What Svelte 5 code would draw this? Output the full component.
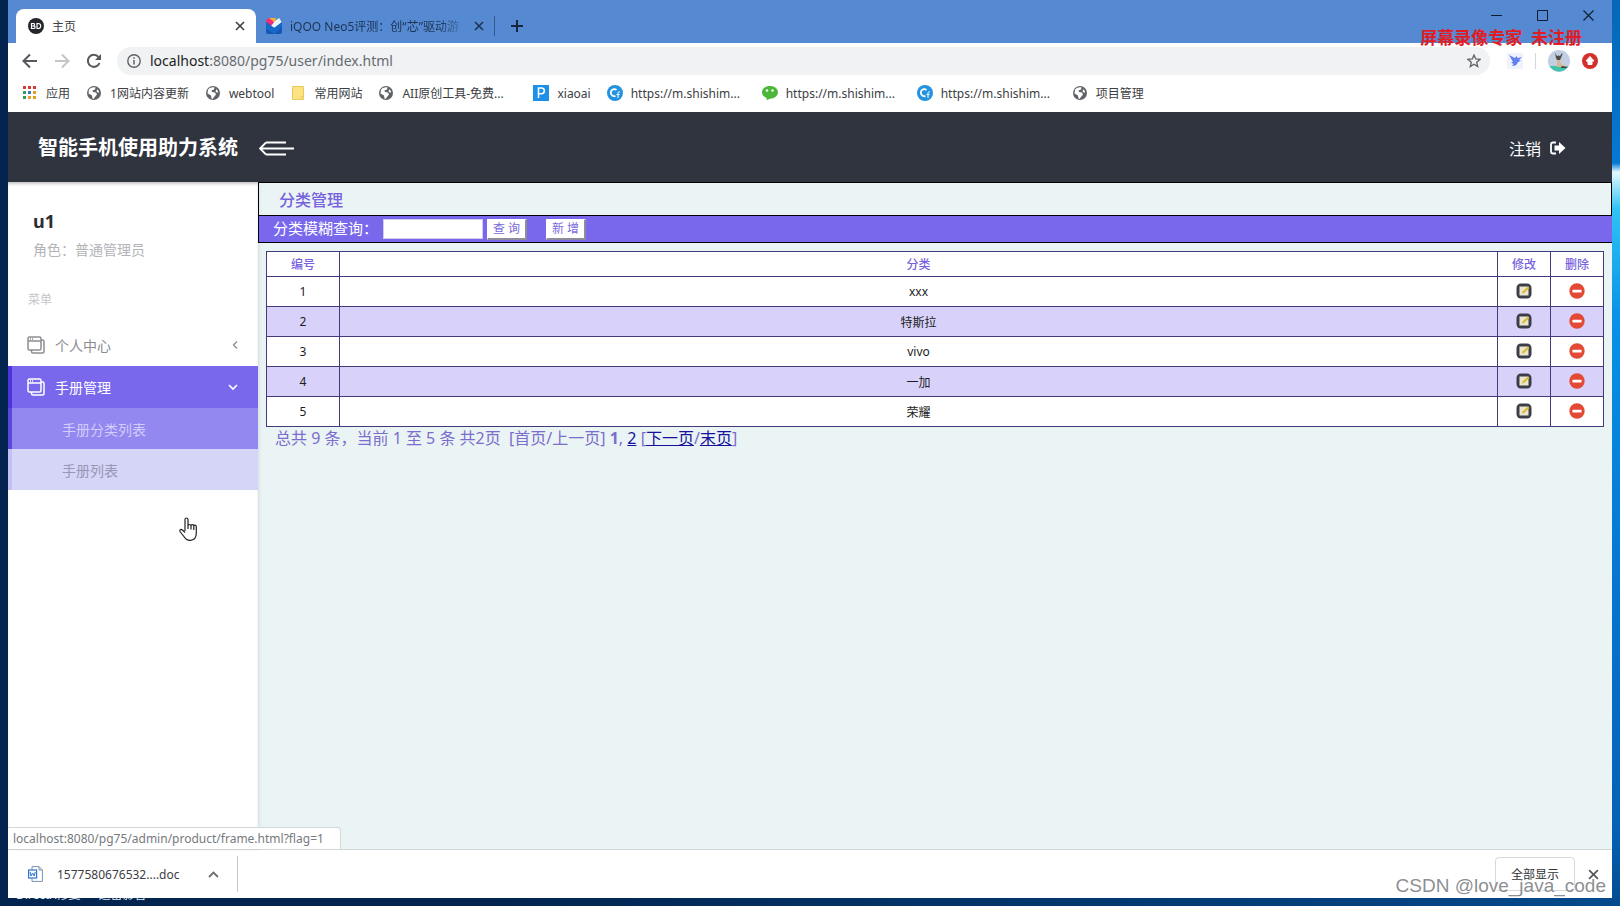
<script>
  const bookmarks = [
    { icon: 'apps', label: '应用' },
    { icon: 'globe', label: '1网站内容更新' },
    { icon: 'globe', label: 'webtool' },
    { icon: 'folder', label: '常用网站' },
    { icon: 'globe', label: 'AII原创工具-免费...', clipped: true },
    { icon: 'p', label: 'xiaoai' },
    { icon: 'c', label: 'https://m.shishim...', clipped: true },
    { icon: 'wechat', label: 'https://m.shishim...', clipped: true },
    { icon: 'c', label: 'https://m.shishim...', clipped: true },
    { icon: 'globe', label: '项目管理' }
  ];
  const dots = ['#d93a3a', '#d93a3a', '#d93a3a', '#2f9e54', '#3578c8', '#e0a021', '#2f9e54', '#e0a021', '#e0a021'];
  const rows = ['xxx', '特斯拉', 'vivo', '一加', '荣耀'];
</script>

{#snippet bookmarkIcon(name)}
  <svg width="16" height="16" viewBox="0 0 16 16" aria-hidden="true">
    {#if name === 'apps'}
      {#each dots as color, i}
        <rect x={1 + (i % 3) * 5} y={1 + Math.floor(i / 3) * 5} width="3" height="3" fill={color} />
      {/each}
    {:else if name === 'globe'}
      <circle cx="8" cy="8" r="7" fill="#5f6368" />
      <path d="M3 4.5C5 2.5 7 2 9.5 2.4L9 4.5 6.5 5.5 7 7l3 .5 1 2-2 2.5-1.5 2L6.500 13.500 6 10.500 2.500 8.500Z" fill="#fff" />
      <path d="m11.500 4 1.500 2.500-.5 1.500-2-1.500Z" fill="#fff" />
    {:else if name === 'folder'}
      <path d="M2.500 1.500h11v13h-11z" fill="#fbe384" stroke="#e9c85c" />
      <path d="M11 14.500v-3h2.500" fill="none" stroke="#e9c85c" />
    {:else if name === 'p'}
      <rect width="16" height="16" fill="#1c8fe8" />
      <path d="M5.500 13V3h3a2.800 2.800 0 0 1 0 5.700h-3" fill="none" stroke="#fff" stroke-width="1.600" />
    {:else if name === 'c'}
      <circle cx="8" cy="8" r="8" fill="#2393e0" />
      <path d="M9.500 5A3.500 3.500 0 1 0 8.500 11" fill="none" stroke="#fff" stroke-width="1.800" />
      <path d="M13 7c-1.500-.5-2 0-2 1.500V13M9.500 9.500h3" fill="none" stroke="#fff" />
    {:else}
      <path d="M8 1c4.500 0 8 2.700 8 6.300s-3.500 6.400-8 6.400l-3.500 1.500.2-2.200C2 11.900 0 9.900 0 7.300 0 3.700 3.500 1 8 1Z" fill="#4cb83a" />
      <circle cx="5" cy="5.500" r="1.200" fill="#fff" /><circle cx="10.500" cy="5.500" r="1.200" fill="#fff" />
    {/if}
  </svg>
{/snippet}

{#snippet cross(size)}
  <svg width={size} height={size} viewBox="0 0 10 10" aria-hidden="true">
    <path d="m1 1 8 8M9 1 1 9" fill="none" stroke="currentColor" stroke-width="1.600" />
  </svg>
{/snippet}

{#snippet stack()}
  <svg width="18" height="18" viewBox="0 0 18 18" fill="none" stroke="currentColor" stroke-width="1.500" aria-hidden="true">
    <rect x="1" y="1" width="13" height="13" rx="1.500" />
    <path d="M1 5h13M3 3h1m1 0h1M14 4h1.500q1.500 0 1.500 1.500v10q0 1.500-1.500 1.500H6q-1.500 0-1.500-1.500V14" />
  </svg>
{/snippet}

<div class="desktop">
  <div class="browser">
    <div class="tabs">
      <div class="tab active">
        <svg width="16" height="16" viewBox="0 0 16 16" aria-hidden="true">
          <circle cx="8" cy="8" r="8" fill="#24262c" />
          <path d="M3.500 5.500v5h2q1.500 0 1.500-1.300T5.500 8h-2 1.700q1.300 0 1.300-1.300T5.200 5.500ZM9 5.500v5h1.200q2.500 0 2.500-2.500t-2.500-2.500Z" fill="none" stroke="#fff" stroke-width="1.200" />
        </svg>
        <span class="tab-title">主页</span>
        <button class="plain" aria-label="关闭标签页">{@render cross(10)}</button>
      </div>
      <div class="tab">
        <svg width="16" height="16" viewBox="0 0 16 16" aria-hidden="true">
          <path d="M0 4 8 5l8-3v12q0 2-2 2H2q-2 0-2-2Z" fill="#1555b4" />
          <path d="M0 2 3 0l6 4-3 4-5-3Z" fill="#f22a78" />
          <path d="m3 0 7 0-1 5Z" fill="#f9a63a" />
          <path d="m9 3 4-3 3 4-7 6-4-2Z" fill="#e8f4fb" />
          <path d="M0 4 8 10l8-6v4L9 16 0 11Z" fill="#1769c9" />
        </svg>
        <span class="tab-title fade">iQOO Neo5评测：创“芯”驱动游</span>
        <button class="plain" aria-label="关闭标签页">{@render cross(10)}</button>
      </div>
      <span class="tab-divider"></span>
      <button class="plain add" aria-label="新标签页">
        <svg width="12" height="12" viewBox="0 0 12 12"><path d="M6 0v12M0 6h12" stroke="#17263c" stroke-width="2" /></svg>
      </button>
      <div class="window-controls">
        <button class="plain" aria-label="最小化"><svg width="11" height="11" viewBox="0 0 11 11"><path d="M0 5.500h11" stroke="#111c30" /></svg></button>
        <button class="plain" aria-label="最大化"><svg width="11" height="11" viewBox="0 0 11 11"><path d="M.5.5h10v10H.5z" fill="none" stroke="#111c30" /></svg></button>
        <button class="plain" aria-label="关闭"><svg width="11" height="11" viewBox="0 0 11 11"><path d="m.5.500 10 10m0-10-10 10" stroke="#111c30" stroke-width="1.200" /></svg></button>
      </div>
      <div class="recorder-mark">屏幕录像专家&nbsp; 未注册</div>
    </div>

    <div class="toolbar">
      <div class="nav-buttons">
        <button class="plain" aria-label="后退"><svg width="16" height="16" viewBox="0 0 16 16"><path d="M15 8H2m6-6.500L1.500 8 8 14.500" fill="none" stroke="#55585c" stroke-width="2" /></svg></button>
        <button class="plain" aria-label="前进"><svg width="16" height="16" viewBox="0 0 16 16"><path d="M1 8h13M8 1.500 14.500 8 8 14.500" fill="none" stroke="#c3c5c8" stroke-width="2" /></svg></button>
        <button class="plain" aria-label="刷新"><svg width="16" height="16" viewBox="0 0 16 16"><path d="M13.500 10A6 6 0 1 1 12.500 4" fill="none" stroke="#55585c" stroke-width="2" /><path d="M15 1v6H9Z" fill="#55585c" /></svg></button>
      </div>
      <div class="omnibox">
        <svg width="14" height="14" viewBox="0 0 14 14" aria-hidden="true"><circle cx="7" cy="7" r="6.200" fill="none" stroke="#5f6368" stroke-width="1.400" /><path d="M7 6v4.500M7 3.300v1.500" stroke="#5f6368" stroke-width="1.500" /></svg>
        <span class="address"><b>localhost</b>:8080/pg75/user/index.html</span>
        <button class="plain" aria-label="收藏"><svg width="14" height="14" viewBox="0 0 14 14"><path d="m7 1 1.700 4 4.300.4-3.300 2.800 1 4.300L7 10.200l-3.700 2.300 1-4.300L1 5.400 5.300 5Z" fill="none" stroke="#5f6368" stroke-width="1.300" /></svg></button>
      </div>
      <div class="extensions">
        <svg width="16" height="16" viewBox="0 0 16 16" aria-hidden="true"><rect width="16" height="16" fill="#f0f2fe" /><path d="m2 2 6 3 1.500-2 1 2L15 4l-3 3 2 1-3 1c-1 3-3 4-6 4l1.500-2L4 9.500 6 9Z" fill="#627ff0" /></svg>
        <span class="toolbar-divider"></span>
        <svg width="22" height="22" viewBox="0 0 22 22" aria-hidden="true">
          <circle cx="11" cy="11" r="11" fill="#c2cfe3" />
          <path d="M1.500 16h19A11 11 0 0 1 1.500 16Z" fill="#3dc4ab" />
          <path d="m7 3 2 3q2-1 3 0l2-3 .5 1-1.500 4-1 2H9L8 8Z" fill="#4e4a45" />
          <path d="M9 10h3l.5 3 2 2 4 1v1H9Z" fill="#d3b98f" />
          <path d="m14 16 5 1v1h-6Z" fill="#38414a" />
        </svg>
        <svg width="16" height="16" viewBox="0 0 16 16" aria-hidden="true"><circle cx="8" cy="8" r="8" fill="#d3302b" /><path d="m8 3.500 4 4.500h-2v3.500H6V8H4Z" fill="#fff" stroke="#fff" stroke-linejoin="round" /></svg>
      </div>
    </div>

    <nav class="bookmarks" aria-label="书签栏">
      {#each bookmarks as item}
        <a href="#bookmark">{@render bookmarkIcon(item.icon)}<span class:clipped={item.clipped}>{item.label}</span></a>
      {/each}
    </nav>

    <header>
      <h1>智能手机使用助力系统</h1>
      <button class="plain" aria-label="收起菜单">
        <svg width="35" height="15" viewBox="0 0 35 15"><path d="M7 1.500h20M1 7.500h34M7 13.500h20M7 1.500l-6 6 6 6" fill="none" stroke="#fff" stroke-width="1.800" /></svg>
      </button>
      <a class="logout" href="#logout">注销
        <svg width="16" height="14" viewBox="0 0 16 14" aria-hidden="true"><path d="M6 1.500H3q-2 0-2 2v7q0 2 2 2h3" fill="none" stroke="#fff" stroke-width="1.800" /><path d="M4.500 4.500H9V1L15.500 7 9 13V9.500H4.500Z" fill="#fff" /></svg>
      </a>
    </header>

    <div class="page">
      <aside>
        <div class="profile">
          <h2>u1</h2>
          <p>角色：普通管理员</p>
        </div>
        <p class="caption">菜单</p>
        <nav aria-label="菜单">
          <a class="item" href="#center">{@render stack()}<span>个人中心</span>
            <svg width="10" height="10" viewBox="0 0 10 10" aria-hidden="true"><path d="M7 1.500 3.500 5 7 8.500" fill="none" stroke="currentColor" stroke-width="1.300" /></svg>
          </a>
          <a class="item open" href="#manual">{@render stack()}<span>手册管理</span>
            <svg width="10" height="10" viewBox="0 0 10 10" aria-hidden="true"><path d="M1 3l4 4 4-4" fill="none" stroke="currentColor" stroke-width="1.600" /></svg>
          </a>
          <a class="sub current" href="#categories">手册分类列表</a>
          <a class="sub hover" href="#manuals">手册列表</a>
        </nav>
      </aside>

      <main>
        <h3>分类管理</h3>
        <form class="search">
          <label for="keyword">分类模糊查询：</label>
          <input id="keyword" type="text" />
          <button type="button">查 询</button>
          <button type="button" class="create">新 增</button>
        </form>
        <div class="results">
          <table>
            <thead>
              <tr><th class="number">编号</th><th>分类</th><th class="action">修改</th><th class="action">删除</th></tr>
            </thead>
            <tbody>
              {#each rows as name, i}
                <tr>
                  <td>{i + 1}</td>
                  <td>{name}</td>
                  <td>
                    <button class="plain" aria-label="修改">
                      <svg width="16" height="16" viewBox="0 0 16 16"><rect x=".5" y=".5" width="15" height="15" rx="4.500" fill="#3b3e49" /><rect x="3.500" y="3.500" width="9" height="9" fill="#eee5cf" /><path d="M6 10.500 6.500 8.500 12 3.500l1.500 1.500L8 10Z" fill="#d6bc35" /></svg>
                    </button>
                  </td>
                  <td>
                    <button class="plain" aria-label="删除">
                      <svg width="16" height="16" viewBox="0 0 16 16"><circle cx="8" cy="8" r="7.700" fill="#e34935" /><rect x="3.500" y="6.800" width="9" height="2.600" rx=".5" fill="#fff" /></svg>
                    </button>
                  </td>
                </tr>
              {/each}
            </tbody>
          </table>
          <p class="pager">总共 9 条，当前 1 至 5 条 共2页&nbsp; [首页/上一页] <b>1</b>, <a href="#page2">2</a> [<a href="#next">下一页</a>/<a href="#last">末页</a>]</p>
        </div>
      </main>
      <div class="status">localhost:8080/pg75/admin/product/frame.html?flag=1</div>
      <svg class="pointer" width="18" height="24" viewBox="0 0 18 24" aria-hidden="true">
        <path d="M6 14V2.500a1.500 1.500 0 0 1 3 0V9q0-1.500 1.400-1.500T12 9q0-1.300 1.400-1.300T14.800 9.300q0-1.200 1.200-1.200t1.300 1.400V16q0 7-6 7.300-4 .2-6-3.300L1 14.500q-.5-1.500.5-2 1-.3 2 .5L6 15.500M9 8.500V12M12 9v3.500M14.800 9.500V13" fill="#fff" stroke="#222" stroke-width="1.200" stroke-linejoin="round" />
      </svg>
    </div>

    <footer>
      <div class="download">
        <svg width="15" height="16" viewBox="0 0 15 16" aria-hidden="true"><path d="M4 4V.6h7L14.400 4v11.400H4V12" fill="#fff" stroke="#7d93ad" /><path d="M11 .6V4h3.400" fill="none" stroke="#7d93ad" /><rect x=".6" y="4" width="8" height="8" fill="#fff" stroke="#2f74cf" stroke-width="1.200" /><path d="m2 6 1 4 1.600-3L6.200 10l1-4" fill="none" stroke="#2f74cf" /></svg>
        <span>1577580676532....doc</span>
        <button class="plain" aria-label="更多"><svg width="11" height="11" viewBox="0 0 11 11"><path d="m1 8 4.500-4.500L10 8" fill="none" stroke="#6c6f73" stroke-width="1.800" /></svg></button>
      </div>
      <button class="show-all">全部显示</button>
      <button class="plain dismiss" aria-label="关闭下载栏">{@render cross(11)}</button>
    </footer>
  </div>
  <div class="desktop-labels"><span>DirectX修复</span><span>迅雷影音</span></div>
  <div class="watermark">CSDN @love_java_code</div>
</div>

<style>
  :global(body) { margin: 0; }
  .desktop, .desktop * { box-sizing: border-box; }
  .desktop {
    position: relative;
    display: flex;
    flex-direction: column;
    min-height: 100vh;
    padding: 0 8px;
    overflow: hidden;
    background: linear-gradient(90deg, #02244f 0, #02244f 30%, #044a8c 100%);
    font-family: "Noto Sans", "Noto Sans CJK SC", sans-serif;
    font-size: 12px;
    color: #3c4043;
  }
  .desktop::after {
    content: "";
    position: absolute;
    top: 0;
    right: 0;
    width: 8px;
    height: 100%;
    background: linear-gradient(#0567b7 0, #0578d6 18%, #e6faff 19%, #31c3f5 23%, #0791e8 35%, #0679d6 60%, #0560b5 92%, #044a8c 100%);
  }
  .browser { flex: 1; display: flex; flex-direction: column; background: #fff; }
  .plain {
    display: inline-flex;
    align-items: center;
    justify-content: center;
    padding: 0;
    border: 0;
    background: none;
    color: inherit;
  }
  a { color: inherit; text-decoration: none; }
  svg { flex: none; display: block; }
  h1, h2, h3, p { margin: 0; }

  .tabs {
    position: relative;
    display: flex;
    align-items: flex-end;
    height: 43px;
    padding-left: 8px;
    background: #558ad2;
  }
  .tab {
    display: flex;
    align-items: center;
    gap: 8px;
    width: 238px;
    height: 34px;
    padding: 0 10px;
    color: #1d3354;
  }
  .tab.active { width: 240px; padding: 0 11px 0 12px; border-radius: 8px 8px 0 0; background: #fff; color: #3c4043; }
  .tab-title { flex: 1; overflow: hidden; white-space: nowrap; }
  .fade { mask-image: linear-gradient(90deg, #000 85%, transparent); }
  .tab-divider { width: 1px; height: 20px; margin-bottom: 7px; background: #35588b; }
  .add { height: 34px; margin-left: 16px; }
  .window-controls {
    display: flex;
    align-self: flex-start;
    gap: 35px;
    height: 30px;
    margin-left: auto;
    padding-right: 18px;
  }
  .recorder-mark {
    position: absolute;
    top: 28px;
    right: 30px;
    z-index: 1;
    font-size: 17px;
    font-weight: 700;
    line-height: 20px;
    white-space: pre;
    color: #e11c24;
  }

  .toolbar { display: flex; align-items: center; height: 35px; padding: 0 14px; }
  .nav-buttons { display: flex; gap: 16px; margin-right: 15px; }
  .omnibox {
    flex: 1;
    display: flex;
    align-items: center;
    gap: 9px;
    height: 28px;
    padding: 0 9px 0 10px;
    border-radius: 14px;
    background: #f0f2f3;
  }
  .address { flex: 1; font-size: 14px; color: #686b70; }
  .address b { font-weight: 400; color: #222; }
  .extensions { display: flex; align-items: center; gap: 12px; margin-left: 17px; }
  .toolbar-divider { width: 1px; height: 16px; background: #d5d7da; }

  .bookmarks {
    display: flex;
    align-items: center;
    gap: 16px;
    height: 34px;
    padding: 0 14px 4px;
    white-space: nowrap;
  }
  .bookmarks a { display: flex; align-items: center; gap: 8px; }
  .clipped { width: 115px; overflow: hidden; }

  header {
    display: flex;
    align-items: center;
    height: 70px;
    padding: 2px 46px 0 30px;
    background: #2f343f;
    color: #fff;
  }
  h1 { margin-right: 21px; font-size: 20px; line-height: 28px; }
  .logout { display: flex; align-items: center; gap: 9px; margin-left: auto; font-size: 16px; }

  .page { position: relative; flex: 1; display: flex; background: #ebf4f5; }
  aside {
    width: 250px;
    background: #fff;
    box-shadow: 1px 0 3px rgba(60, 80, 100, .15), inset 0 3px 3px -1px rgba(30, 30, 40, .25);
    font-size: 14px;
    color: #8b8d93;
  }
  .profile { padding: 25px 25px 0; }
  h2 { font-size: 18px; line-height: 28px; color: #2c2d33; }
  .profile p { line-height: 30px; color: #b2b4b9; }
  .caption { padding: 25px 20px 0; font-size: 12px; line-height: 20px; color: #c4c5ca; }
  aside nav { padding-top: 14px; }
  .item, .sub { display: flex; align-items: center; height: 41px; }
  .item { gap: 10px; height: 42px; padding: 0 18px 0 19px; }
  .item span { flex: 1; }
  .open { padding: 0 20px 0 15px; border-left: 4px solid #4b34dc; background: #7968ec; color: #fff; }
  .sub { padding-left: 50px; border-left: 4px solid #5a48da; }
  .current { background: #9387f0; color: #d2cdfa; }
  .hover { border-color: #c6bff6; background: #d5d5f7; color: #9696b5; }

  main { flex: 1; min-width: 0; }
  h3 {
    height: 34px;
    padding-left: 20px;
    border: 1px solid #000;
    font-size: 16px;
    font-weight: 500;
    line-height: 35px;
    color: #7662dd;
  }
  .search {
    display: flex;
    align-items: center;
    height: 27px;
    padding-left: 14px;
    border: solid #000;
    border-width: 0 0 1px 1px;
    background: #7968ec;
    color: #fff;
  }
  .search label { width: 110px; padding-bottom: 3px; font-size: 15px; line-height: 20px; }
  .search input { width: 100px; height: 20px; padding: 0 2px; border: 1px solid #d0ccee; background: #fff; }
  .search button {
    width: 40px;
    height: 21px;
    margin-left: 4px;
    padding: 0;
    border: 1px solid #fff;
    border-right: 2px solid #8d8c9a;
    border-bottom: 2px solid #8d8c9a;
    background: #fff;
    font: inherit;
    font-size: 12px;
    line-height: 18px;
    white-space: nowrap;
    color: #7968d8;
  }
  .search .create { margin-left: 19px; }

  .results { padding: 8px 8px 0; }
  table { width: 100%; border-collapse: collapse; table-layout: fixed; background: #fff; color: #1c1c22; }
  th, td { height: 30px; padding: 0; border: 1px solid #433b78; text-align: center; }
  th { height: 25px; font-weight: 500; color: #7662dd; }
  .number { width: 73px; }
  .action { width: 53px; }
  td .plain { padding-bottom: 2px; vertical-align: middle; }
  tbody tr:nth-child(even) { background: #d8d2fa; }
  .pager { padding-left: 9px; font-size: 16px; line-height: 22px; color: #7b6dcc; }
  .pager a { color: #17109c; text-decoration: underline; }

  .status {
    position: absolute;
    bottom: 0;
    left: 0;
    height: 22px;
    padding: 0 16px 0 5px;
    border: solid #d4d7da;
    border-width: 1px 1px 0 0;
    border-radius: 0 4px 0 0;
    background: #fff;
    font-size: 12px;
    line-height: 22px;
    color: #76797d;
  }
  .pointer { position: absolute; top: 335px; left: 171px; }

  footer {
    display: flex;
    align-items: center;
    height: 49px;
    padding: 0 13px 0 20px;
    border-top: 1px solid #d4d7da;
  }
  .download {
    display: flex;
    align-items: center;
    gap: 14px;
    height: 36px;
    padding-right: 18px;
    border-right: 1px solid #c4c7ca;
  }
  .download .plain { margin-left: 14px; }
  .show-all {
    width: 80px;
    height: 34px;
    margin: 0 13px 0 auto;
    border: 1px solid #d6d8dc;
    border-radius: 4px;
    background: #fff;
    font: inherit;
    color: #303236;
  }
  .dismiss { color: #55585c; }
  .desktop-labels {
    display: flex;
    align-items: flex-end;
    gap: 18px;
    height: 8px;
    padding: 0 8px 3px;
    overflow: hidden;
    line-height: 16px;
    color: #dfe8f2;
  }
  .watermark {
    position: absolute;
    right: 14px;
    bottom: 8px;
    z-index: 1;
    font-family: "Liberation Sans", sans-serif;
    font-size: 19px;
    line-height: 24px;
    color: rgba(110, 112, 118, .8);
    text-shadow: 1px 1px 0 #fff;
  }
</style>
